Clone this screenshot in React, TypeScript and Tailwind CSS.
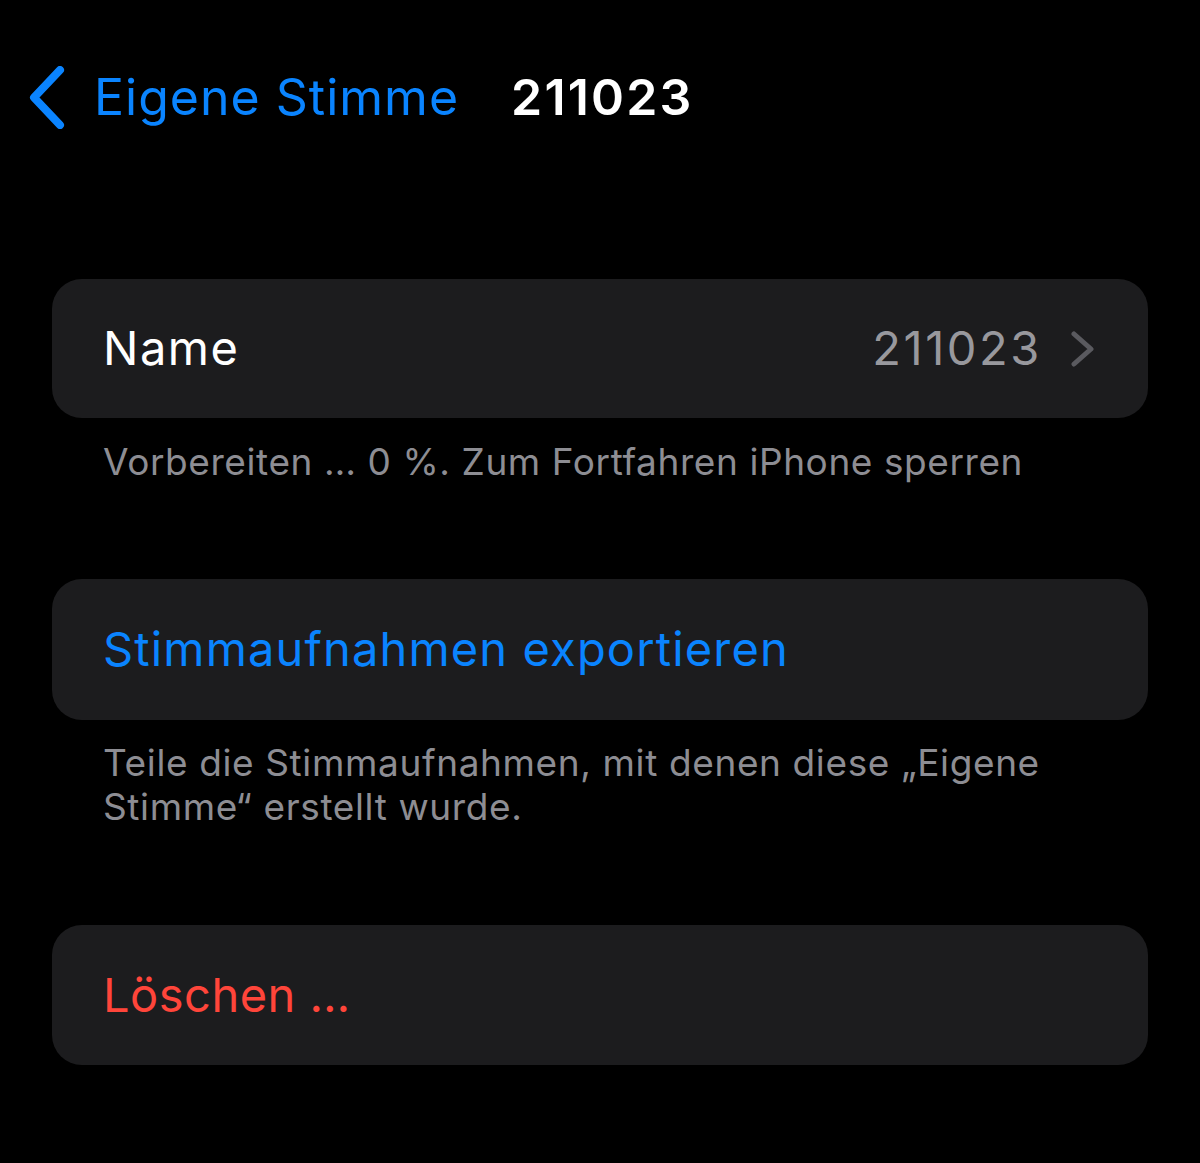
import React from 'react';

function BackChevron() {
  return (
    <svg width="38" height="63" viewBox="0 0 38 63" fill="none" className="shrink-0">
      <path d="M32 4 L6 31.5 L32 59" stroke="#0a84ff" strokeWidth="8" strokeLinecap="round" strokeLinejoin="round" />
    </svg>
  );
}

function RowChevron() {
  return (
    <svg width="24" height="36" viewBox="0 0 24 36" fill="none" className="shrink-0">
      <path d="M3 3 L20 18 L3 33" stroke="#5a5a5f" strokeWidth="5" strokeLinecap="round" strokeLinejoin="round" />
    </svg>
  );
}

export default function App() {
  return (
    <div
      className="w-[1200px] h-[1163px] bg-black overflow-hidden"
      style={{ fontFamily: 'Inter, "Noto Sans", sans-serif' }}
    >
      <header className="flex items-center h-[76px] mt-[59px] pl-[28px]">
        <BackChevron />
        <span className="ml-[28px] text-[50px] text-[#0a84ff] tracking-[1px]">Eigene Stimme</span>
        <span className="ml-[52px] text-[50px] font-semibold text-white tracking-[2.2px]">211023</span>
      </header>

      <main className="px-[52px] mt-[144px]">
        <div className="flex items-center h-[139px] rounded-[30px] bg-[#1c1c1e] pl-[51px] pr-[53px]">
          <span className="text-[47px] text-white tracking-[1.5px]">Name</span>
          <span className="ml-auto text-[47px] text-[#98989d] tracking-[2.6px]">211023</span>
          <span className="ml-[29px] flex items-center">
            <RowChevron />
          </span>
        </div>
        <p className="mt-[22px] pl-[51px] text-[37px] leading-[44px] text-[#8d8d93] tracking-[0.58px]">
          Vorbereiten … 0 %. Zum Fortfahren iPhone sperren
        </p>

        <div className="mt-[95px] flex items-center h-[141px] rounded-[30px] bg-[#1c1c1e] pl-[51px]">
          <span className="text-[47px] text-[#0a84ff] tracking-[1.15px]">Stimmaufnahmen exportieren</span>
        </div>
        <p className="mt-[21px] pl-[51px] pr-[90px] text-[37px] leading-[44px] text-[#8d8d93] tracking-[0.62px]">
          Teile die Stimmaufnahmen, mit denen diese „Eigene Stimme“ erstellt wurde.
        </p>

        <div className="mt-[96px] flex items-center h-[140px] rounded-[30px] bg-[#1c1c1e] pl-[51px]">
          <span className="text-[47px] text-[#ff453a] tracking-[0.5px]">Löschen …</span>
        </div>
      </main>
    </div>
  );
}
